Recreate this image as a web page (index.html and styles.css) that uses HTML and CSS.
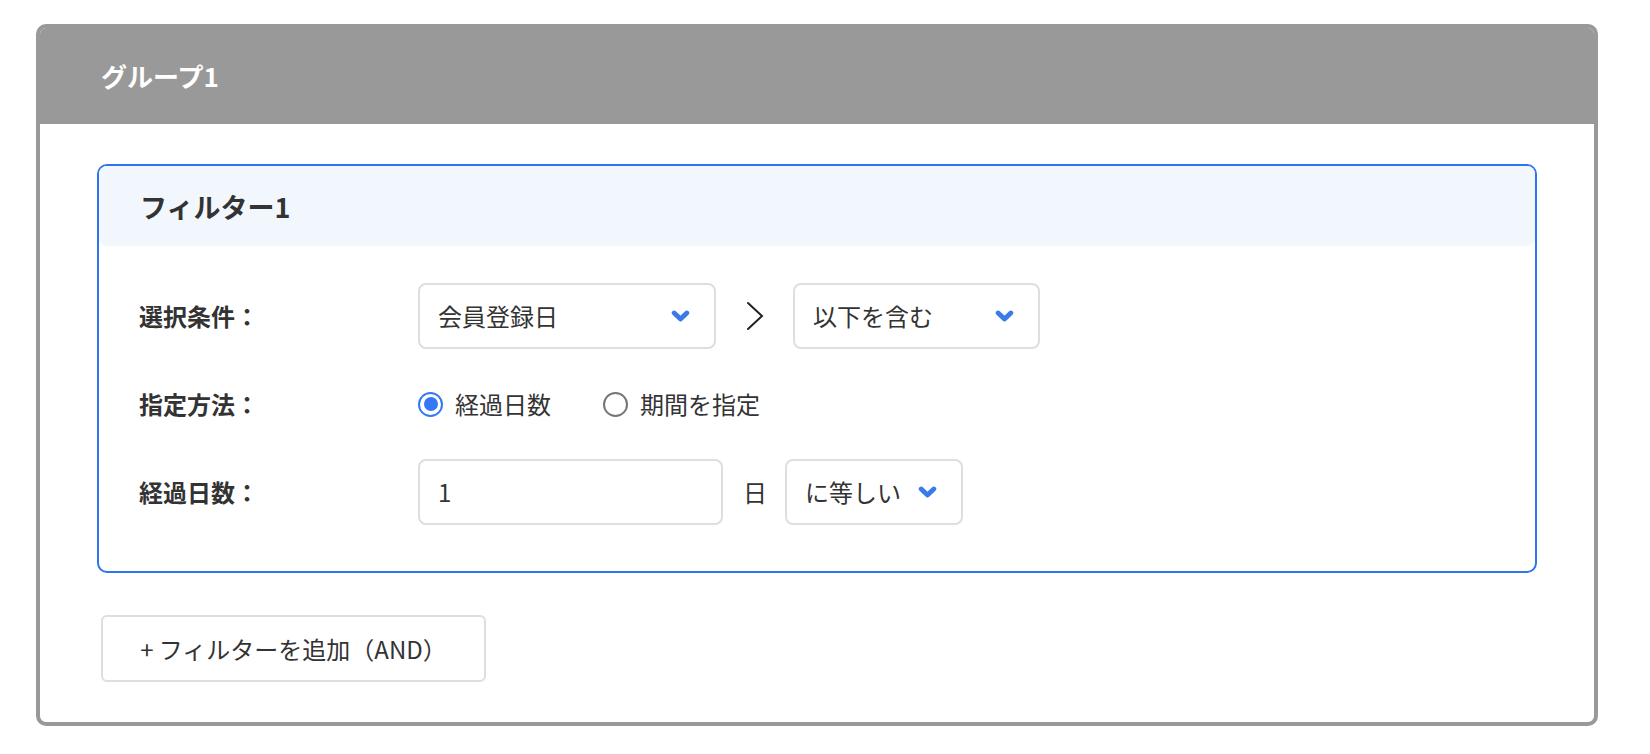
FILE: index.html
```html
<!DOCTYPE html>
<html lang="ja">
<head>
<meta charset="utf-8">
<title>グループ1</title>
<link rel="stylesheet" href="styles.css">
</head>
<body>
<div class="page">
  <section class="group">
    <header class="group-header"><h2 class="group-title">グループ1</h2></header>
    <div class="group-body">
      <div class="filter">
        <div class="filter-header"><h3 class="filter-title">フィルター1</h3></div>
        <div class="filter-body">
          <div class="row">
            <div class="label">選択条件：</div>
            <div class="controls">
              <div class="select select-1">
                <span>会員登録日</span>
                <svg class="chev" viewBox="0 0 20 14" width="19" height="13"><path d="M3.2 3.2 L10 9.8 L16.8 3.2"/></svg>
              </div>
              <span class="arrow">
                <svg viewBox="0 0 18 30" width="18" height="30"><path d="M2 2 L16 15 L2 28"/></svg>
              </span>
              <div class="select select-2">
                <span>以下を含む</span>
                <svg class="chev" viewBox="0 0 20 14" width="19" height="13"><path d="M3.2 3.2 L10 9.8 L16.8 3.2"/></svg>
              </div>
            </div>
          </div>
          <div class="row">
            <div class="label">指定方法：</div>
            <div class="controls radios">
              <label class="radio-option">
                <span class="radio radio-checked"><span class="radio-dot"></span></span>
                <span>経過日数</span>
              </label>
              <label class="radio-option">
                <span class="radio"></span>
                <span>期間を指定</span>
              </label>
            </div>
          </div>
          <div class="row">
            <div class="label">経過日数：</div>
            <div class="controls">
              <div class="input">1</div>
              <span class="unit">日</span>
              <div class="select select-3">
                <span>に等しい</span>
                <svg class="chev" viewBox="0 0 20 14" width="19" height="13"><path d="M3.2 3.2 L10 9.8 L16.8 3.2"/></svg>
              </div>
            </div>
          </div>
        </div>
      </div>
      <button class="add-btn" type="button">+ フィルターを追加（AND）</button>
    </div>
  </section>
</div>
</body>
</html>
```

FILE: styles.css
```css
* {
  box-sizing: border-box;
}

body {
  margin: 0;
  background: #ffffff;
  font-family: "Noto Sans CJK JP", "Noto Sans", sans-serif;
  color: #333333;
}

.page {
  padding: 24px 0 0 36px;
}

.group {
  width: 1562px;
  border: 4px solid #999999;
  border-radius: 10px;
  overflow: hidden;
}

.group-header {
  height: 96px;
  background: #999999;
  display: flex;
  align-items: center;
  padding-left: 61px;
}

.group-title {
  margin: 0;
  font-size: 26px;
  font-weight: 700;
  line-height: 1;
  color: #ffffff;
}

.group-body {
  padding: 40px 57px 40px 57px;
}

.filter {
  border: 2px solid #2f74ef;
  border-radius: 10px;
}

.filter-header {
  height: 80px;
  background: #f2f7fe;
  border-radius: 8px;
  display: flex;
  align-items: center;
  padding-left: 41px;
}

.filter-title {
  margin: 0;
  font-size: 27px;
  font-weight: 700;
  line-height: 1;
  color: #333333;
}

.filter-body {
  padding: 37px 0 46px 40px;
  display: flex;
  flex-direction: column;
  gap: 22px;
}

.row {
  display: flex;
  align-items: center;
  height: 66px;
}

.label {
  width: 279px;
  font-size: 24px;
  font-weight: 700;
  line-height: 1;
  color: #333333;
}

.controls {
  display: flex;
  align-items: center;
  font-size: 24px;
  line-height: 1;
}

.select {
  height: 66px;
  border: 2px solid #dedede;
  border-radius: 8px;
  background: #ffffff;
  display: flex;
  align-items: center;
  justify-content: space-between;
  padding: 0 24px 0 18px;
  font-size: 24px;
  color: #333333;
}

.select-1 {
  width: 298px;
}

.select-2 {
  width: 247px;
}

.select-3 {
  gap: 17px;
}

.chev path {
  fill: none;
  stroke: #3b7be8;
  stroke-width: 5.2;
  stroke-linecap: round;
  stroke-linejoin: round;
}

.arrow {
  width: 77px;
  display: flex;
  justify-content: center;
}

.arrow path {
  fill: none;
  stroke: #222222;
  stroke-width: 2;
  stroke-linecap: round;
  stroke-linejoin: miter;
}

.radios {
  gap: 52px;
}

.radio-option {
  display: flex;
  align-items: center;
  gap: 12px;
  color: #333333;
}

.radio {
  width: 25px;
  height: 25px;
  border-radius: 50%;
  border: 2px solid #767676;
  display: flex;
  align-items: center;
  justify-content: center;
}

.radio-checked {
  border: 2.5px solid #3478f6;
}

.radio-dot {
  width: 14px;
  height: 14px;
  border-radius: 50%;
  background: #3478f6;
}

.input {
  width: 305px;
  height: 66px;
  border: 2px solid #dedede;
  border-radius: 8px;
  display: flex;
  align-items: center;
  padding-left: 18px;
  color: #333333;
}

.unit {
  margin: 0 18px 0 20px;
  color: #333333;
}

.add-btn {
  display: block;
  margin: 42px 0 0 4px;
  width: 385px;
  height: 67px;
  border: 2px solid #dedede;
  border-radius: 6px;
  background: #ffffff;
  font-family: inherit;
  font-size: 24px;
  line-height: 1;
  color: #333333;
  padding: 0;
  cursor: pointer;
}
```
